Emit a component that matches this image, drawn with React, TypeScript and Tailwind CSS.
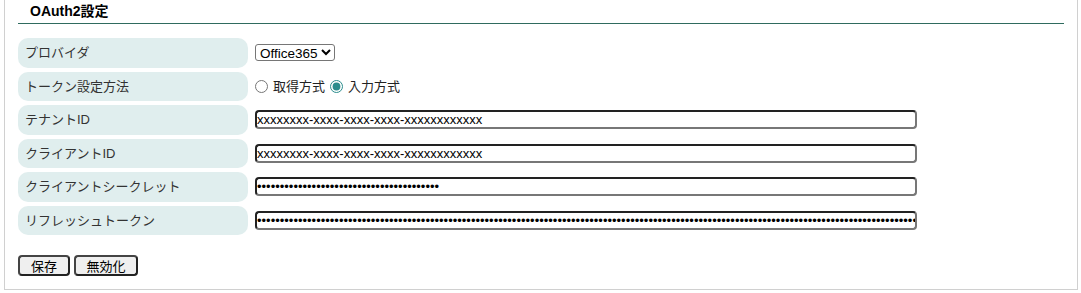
import * as React from 'react';

const rows = [
  { label: 'テナントID', value: 'xxxxxxxx-xxxx-xxxx-xxxx-xxxxxxxxxxxx', type: 'text' },
  { label: 'クライアントID', value: 'xxxxxxxx-xxxx-xxxx-xxxx-xxxxxxxxxxxx', type: 'text' },
  { label: 'クライアントシークレット', value: 's'.repeat(40), type: 'password' },
  { label: 'リフレッシュトークン', value: 'r'.repeat(220), type: 'password' },
];

const Label = ({ children }: { children: React.ReactNode }) => (
  <div className="w-[230px] h-full flex items-center pl-[7px] rounded-[10px] bg-[#e0eeee] text-[13px] text-[#333]">
    {children}
  </div>
);

export default function App() {
  return (
    <div className="h-[293px] bg-white font-['Liberation_Sans','Noto_Sans_CJK_JP',sans-serif]">
      <div className="ml-[4px] w-[1074px] h-[290px] border-l border-r border-b border-[#d0d0d0] pl-[13px] pr-[13px]">
        <div className="h-[24px] border-b border-[#2f6b5e] pl-[12px] text-[14px] font-bold leading-[22px] text-black">
          OAuth2設定
        </div>

        <div className="mt-[14px] flex flex-col gap-[4px]">
          <div className="h-[29.5px] flex items-center gap-[7px]">
            <Label>プロバイダ</Label>
            <select
              defaultValue="office365"
              className="h-[17px] border border-[#767676] rounded-[3px] text-[13.5px] leading-[15px] text-black bg-white"
            >
              <option value="office365">Office365</option>
              <option value="google">Google</option>
            </select>
          </div>

          <div className="h-[29.5px] flex items-center gap-[7px]">
            <Label>トークン設定方法</Label>
            <div className="flex items-center text-[13px] text-[#222]">
              <input type="radio" name="tokenMode" className="w-[13px] h-[13px] accent-[#2a8c8c]" />
              <span className="ml-[5px] mr-[5px]">取得方式</span>
              <input type="radio" name="tokenMode" defaultChecked className="w-[13px] h-[13px] accent-[#2a8c8c]" />
              <span className="ml-[5px]">入力方式</span>
            </div>
          </div>

          {rows.map((row) => (
            <div key={row.label} className="h-[29.5px] flex items-center gap-[7px]">
              <Label>{row.label}</Label>
              <input
                type={row.type}
                defaultValue={row.value}
                className="w-[662px] h-[19px] border-2 border-t-[#222] border-l-[#222] border-r-[#777] border-b-[#777] rounded-[4px] text-[13px] text-black bg-white font-['Liberation_Sans',sans-serif]"
              />
            </div>
          ))}
        </div>

        <div className="mt-[20px] flex gap-[4px]">
          <button className="w-[52px] h-[21px] border-2 border-t-[#444] border-l-[#444] border-r-[#222] border-b-[#222] rounded-[4px] bg-[#efefef] text-[13px] text-black">
            保存
          </button>
          <button className="w-[64px] h-[21px] border-2 border-t-[#444] border-l-[#444] border-r-[#222] border-b-[#222] rounded-[4px] bg-[#efefef] text-[13px] text-black">
            無効化
          </button>
        </div>
      </div>
    </div>
  );
}
